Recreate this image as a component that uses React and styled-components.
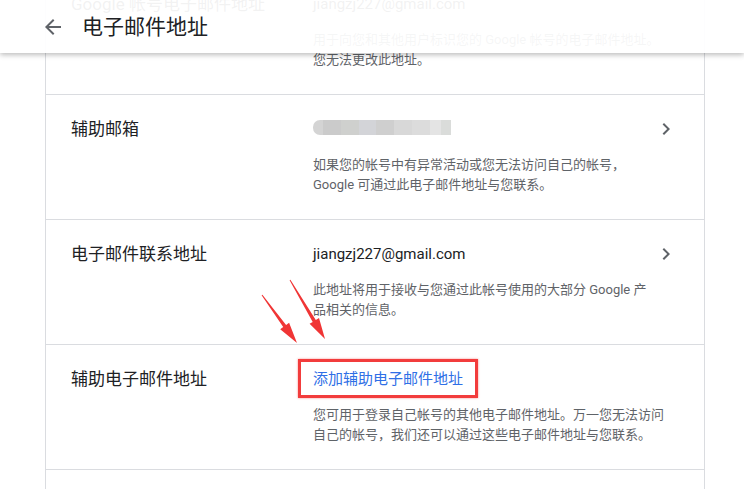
import styled, { createGlobalStyle } from 'styled-components';

const GlobalStyle = createGlobalStyle`
  html, body {
    margin: 0;
    padding: 0;
    background: #ffffff;
    overflow: hidden;
  }
  body {
    font-family: Roboto, "Noto Sans CJK SC", sans-serif;
    color: #202124;
  }
`;

const Page = styled.div`
  position: relative;
  width: 744px;
  height: 489px;
  overflow: hidden;
`;

const Header = styled.header`
  position: absolute;
  top: 0;
  left: 0;
  right: 0;
  height: 53px;
  display: flex;
  align-items: center;
  gap: 17px;
  padding-left: 41px;
  background: rgba(255, 255, 255, 0.94);
  box-shadow: 0 2px 5px rgba(0, 0, 0, 0.26);
  z-index: 2;
`;

const BackIcon = styled.svg`
  width: 24px;
  height: 24px;
  fill: #5f6368;
  flex-shrink: 0;
`;

const Title = styled.h1`
  margin: 0;
  font-size: 21px;
  font-weight: 400;
  color: #202124;
  line-height: 26px;
`;

// the page is scrolled a bit: the first row sits under the header
const Card = styled.section`
  width: 658px;
  margin: -30px 0 0 45px;
  border-left: 1px solid #dadce0;
  border-right: 1px solid #dadce0;
`;

const Row = styled.div`
  display: grid;
  grid-template-columns: 242px 1fr 24px;
  padding: 24px 26px 24px 25px;
  border-bottom: 1px solid #dadce0;
`;

const Label = styled.div`
  font-size: 17px;
  line-height: 20px;
  color: #202124;
`;

const Content = styled.div`
  display: flex;
  flex-direction: column;
  align-items: flex-start;
`;

const Value = styled.div`
  font-size: 15px;
  line-height: 20px;
  height: 20px;
  color: #202124;
  display: flex;
  align-items: center;
`;

const Blurred = styled.span`
  display: block;
  width: 138px;
  height: 15px;
  margin-top: -3px;
  border-radius: 7px 0 0 7px;
  background: linear-gradient(
    90deg,
    #d4d4d4 0%,
    #d4d4d4 7%,
    #cbcbcb 7%,
    #cbcbcb 20%,
    #cfd0ce 20%,
    #cfd0ce 33%,
    #d3d4d8 33%,
    #d3d4d8 46%,
    #cfcfcf 46%,
    #cfcfcf 59%,
    #d8d8d8 59%,
    #d8d8d8 72%,
    #dcdcdc 72%,
    #dcdcdc 85%,
    #e4e4e4 85%,
    #e4e4e4 93%,
    #dadcda 93%
  );
  filter: blur(0.5px);
`;

const Highlight = styled.span`
  display: flex;
  align-items: center;
  height: 39px;
  box-sizing: border-box;
  margin: -10px 0 -9px -15px;
  padding: 0 12px 0 12px;
  border: 3px solid #f23c3c;
  box-shadow: 0 0 2px rgba(242, 60, 60, 0.6);
`;

const Link = styled.a`
  font-size: 15px;
  line-height: 20px;
  color: #2f6fe6;
  text-decoration: none;
`;

const Desc = styled.p`
  margin: 16px 0 0;
  font-size: 13px;
  line-height: 20px;
  color: #5f6368;
  white-space: nowrap;
`;

const Chevron = styled.svg`
  width: 24px;
  height: 24px;
  margin-top: -2px;
  fill: #5f6368;
`;

const Annotations = styled.svg`
  position: absolute;
  top: 0;
  left: 0;
  width: 744px;
  height: 489px;
  pointer-events: none;
  z-index: 1;
`;

const arrowPoints = (x1, y1, x2, y2) => {
  const len = Math.hypot(x2 - x1, y2 - y1);
  const ux = (x2 - x1) / len;
  const uy = (y2 - y1) / len;
  const nx = -uy;
  const ny = ux;
  const bx = x2 - ux * 21;
  const by = y2 - uy * 21;
  const p = (x, y, w) => `${(x + nx * w).toFixed(1)},${(y + ny * w).toFixed(1)}`;
  return [
    p(x1, y1, 0.5),
    p(bx, by, 1.8),
    p(bx, by, 5.5),
    p(x2, y2, 0),
    p(bx, by, -5.5),
    p(bx, by, -1.8),
    p(x1, y1, -0.5),
  ].join(' ');
};

const rows = [
  {
    label: 'Google 帐号电子邮件地址',
    value: 'jiangzj227@gmail.com',
    desc: ['用于向您和其他用户标识您的 Google 帐号的电子邮件地址。', '您无法更改此地址。'],
  },
  {
    label: '辅助邮箱',
    blurred: true,
    chevron: true,
    desc: ['如果您的帐号中有异常活动或您无法访问自己的帐号，', 'Google 可通过此电子邮件地址与您联系。'],
  },
  {
    label: '电子邮件联系地址',
    value: 'jiangzj227@gmail.com',
    chevron: true,
    desc: ['此地址将用于接收与您通过此帐号使用的大部分 Google 产', '品相关的信息。'],
  },
  {
    label: '辅助电子邮件地址',
    link: '添加辅助电子邮件地址',
    desc: ['您可用于登录自己帐号的其他电子邮件地址。万一您无法访问', '自己的帐号，我们还可以通过这些电子邮件地址与您联系。'],
  },
  { label: '', empty: true },
];

const App = () => {
  return (
    <Page>
      <GlobalStyle />
      <Header>
        <BackIcon viewBox="0 0 24 24">
          <path d="M20 11H7.83l5.59-5.59L12 4l-8 8 8 8 1.41-1.41L7.83 13H20v-2z" />
        </BackIcon>
        <Title>电子邮件地址</Title>
      </Header>

      <Card>
        {rows.map((row, i) => (
          <Row key={i}>
            <Label>{row.label}</Label>
            <Content>
              {row.value && <Value>{row.value}</Value>}
              {row.blurred && (
                <Value>
                  <Blurred />
                </Value>
              )}
              {row.link && (
                <Highlight>
                  <Link href="#">{row.link}</Link>
                </Highlight>
              )}
              {row.desc && (
                <Desc>
                  {row.desc[0]}
                  <br />
                  {row.desc[1]}
                </Desc>
              )}
              {row.empty && <Value />}
            </Content>
            {row.chevron ? (
              <Chevron viewBox="0 0 24 24">
                <path d="M10 6L8.59 7.41 13.17 12l-4.58 4.59L10 18l6-6z" />
              </Chevron>
            ) : (
              <span />
            )}
          </Row>
        ))}
      </Card>

      <Annotations viewBox="0 0 744 489">
        <polygon points={arrowPoints(262, 295, 297, 343)} fill="#f03535" />
        <polygon points={arrowPoints(290, 280, 325, 339)} fill="#f03535" />
      </Annotations>
    </Page>
  );
};

export default App;
